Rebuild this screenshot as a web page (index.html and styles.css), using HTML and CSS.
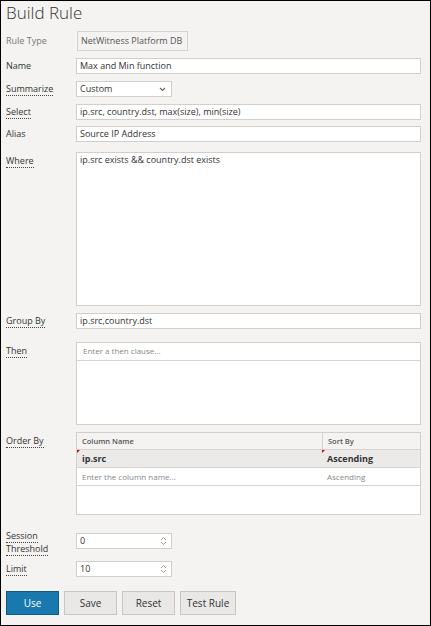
FILE: index.html
```html
<!DOCTYPE html>
<html>
<head>
<meta charset="utf-8">
<link rel="stylesheet" href="styles.css">
</head>
<body>
<div class="panel">
  <h1 class="title">Build Rule</h1>
  <div class="row row-type">
    <span class="lbl muted">Rule Type</span>
    <div class="static">NetWitness Platform DB</div>
  </div>
  <div class="row row-name">
    <span class="lbl plain">Name</span>
    <div class="field">Max and Min function</div>
  </div>
  <div class="row row-sum">
    <span class="lbl"><span class="ul">Summarize</span></span>
    <div class="field select">Custom
      <svg class="chev" width="7" height="5" viewBox="0 0 7 5"><path d="M1 1 L3.5 3.5 L6 1" fill="none" stroke="#666" stroke-width="1.1"/></svg>
    </div>
  </div>
  <div class="row row-sel">
    <span class="lbl"><span class="ul">Select</span></span>
    <div class="field">ip.src, country.dst, max(size), min(size)</div>
  </div>
  <div class="row row-alias">
    <span class="lbl plain">Alias</span>
    <div class="field">Source IP Address</div>
  </div>
  <div class="row row-where">
    <span class="lbl top"><span class="ul">Where</span></span>
    <div class="field area">ip.src exists &amp;&amp; country.dst exists</div>
  </div>
  <div class="row row-group">
    <span class="lbl"><span class="ul">Group By</span></span>
    <div class="field">ip.src,country.dst</div>
  </div>
  <div class="row row-then">
    <span class="lbl top"><span class="ul">Then</span></span>
    <div class="list">
      <div class="list-input placeholder">Enter a then clause...</div>
      <div class="list-body"></div>
    </div>
  </div>
  <div class="row row-order">
    <span class="lbl top"><span class="ul">Order By</span></span>
    <div class="grid">
      <div class="g-row g-head">
        <div class="c1">Column Name</div>
        <div class="c2">Sort By</div>
      </div>
      <div class="g-row g-sel">
        <div class="c1 dirty">ip.src</div>
        <div class="c2 dirty">Ascending</div>
      </div>
      <div class="g-row g-new">
        <div class="c1 placeholder">Enter the column name...</div>
        <div class="c2 placeholder">Ascending</div>
      </div>
      <div class="g-fill"></div>
    </div>
  </div>
  <div class="row row-sess">
    <span class="lbl two"><span class="ul">Session Threshold</span></span>
    <div class="field num">0
      <svg class="spin" width="7" height="10" viewBox="0 0 7 10"><path d="M1 4 L3.5 1.5 L6 4 M1 6 L3.5 8.5 L6 6" fill="none" stroke="#999" stroke-width="1"/></svg>
    </div>
  </div>
  <div class="row row-limit">
    <span class="lbl"><span class="ul">Limit</span></span>
    <div class="field num">10
      <svg class="spin" width="7" height="10" viewBox="0 0 7 10"><path d="M1 4 L3.5 1.5 L6 4 M1 6 L3.5 8.5 L6 6" fill="none" stroke="#999" stroke-width="1"/></svg>
    </div>
  </div>
  <div class="buttons">
    <button class="btn primary">Use</button>
    <button class="btn">Save</button>
    <button class="btn">Reset</button>
    <button class="btn">Test Rule</button>
  </div>
</div>
</body>
</html>
```

FILE: styles.css
```css
* { box-sizing: border-box; }
html, body { margin: 0; padding: 0; }
body {
  width: 431px;
  height: 626px;
  background: #f4f3f1;
  border: 1px solid #000;
  font-family: "Open Sans", "Liberation Sans", sans-serif;
  font-size: 9px;
  color: #333;
  overflow: hidden;
}
.panel {
  padding: 0 9px 0 5px;
}
.title {
  margin: 0;
  font-size: 17px;
  font-weight: 300;
  line-height: 22px;
  height: 30px;
  padding-top: 1px;
  color: #333;
}
.row {
  display: grid;
  grid-template-columns: 70px 1fr;
  align-items: start;
  margin-top: 7px;
}
.row-type { margin-top: 0; }
.row-alias { margin-top: 6px; }
.row-where { margin-top: 10px; }
.row-then { margin-top: 13px; }
.row-sess { margin-top: 18px; }
.row-limit { margin-top: 12px; }

.lbl {
  line-height: 16px;
  white-space: nowrap;
  color: #333;
}
.lbl.top { padding-top: 1px; }
.lbl.muted { color: #777; line-height: 20px; }
.ul {
  border-bottom: 1px dotted #444;
}
.lbl.two {
  white-space: normal;
  line-height: 13px;
  height: 16px;
  margin-top: -4px;
}

.static {
  width: 111px;
  height: 20px;
  border: 1px solid #d6d3cf;
  background: #f4f3f1;
  line-height: 18px;
  padding-left: 3px;
  color: #555;
  white-space: nowrap;
  margin-left: 1px;
}
.field {
  height: 16px;
  background: #fff;
  border: 1px solid #d2cfcb;
  line-height: 14px;
  padding-left: 3px;
  white-space: nowrap;
  overflow: hidden;
  position: relative;
}
.select, .num { width: 96px; }
.chev { position: absolute; right: 5px; top: 5px; }
.spin { position: absolute; right: 4px; top: 2px; }
.area { height: 154px; white-space: normal; line-height: 13px; }

.list {
  height: 83px;
  border: 1px solid #d2cfcb;
  background: #fff;
  display: flex;
  flex-direction: column;
}
.list-input {
  height: 18px;
  border-bottom: 1px solid #d6d3cf;
  line-height: 16px;
  padding-left: 6px;
  font-size: 8px;
}
.placeholder { color: #888; }

.grid {
  height: 83px;
  border: 1px solid #d2cfcb;
  background: #fff;
  display: flex;
  flex-direction: column;
}
.g-row {
  display: grid;
  grid-template-columns: 245px 1fr;
  height: 18px;
  border-bottom: 1px solid #d6d3cf;
}
.g-row > div {
  padding-left: 5px;
  line-height: 17px;
  position: relative;
  white-space: nowrap;
}
.g-head { height: 17px; background: #f4f3f1; }
.g-head > div { font-size: 7.5px; font-weight: 600; color: #555; line-height: 16px; }
.g-head .c2 { border-left: 1px solid #d6d3cf; }
.g-sel { background: #ebeae8; }
.g-sel > div { font-weight: 700; color: #333; }
.g-new > div { font-size: 8px; }
.dirty::before {
  content: "";
  position: absolute;
  left: 0;
  top: 0;
  border-top: 3px solid #d00;
  border-right: 3px solid transparent;
}

.buttons {
  display: flex;
  gap: 5px;
  margin-top: 14px;
}
.btn {
  height: 24px;
  font-family: "Open Sans", "Liberation Sans", sans-serif;
  font-size: 10px;
  color: #333;
  background: #e9e8e6;
  border: 1px solid #c9c6c2;
  padding: 0;
  width: 53px;
  margin: 0;
}
.btn:last-child { width: 56px; }
.btn.primary {
  background: #1978ae;
  border-color: #0f5b87;
  color: #fff;
}
```
